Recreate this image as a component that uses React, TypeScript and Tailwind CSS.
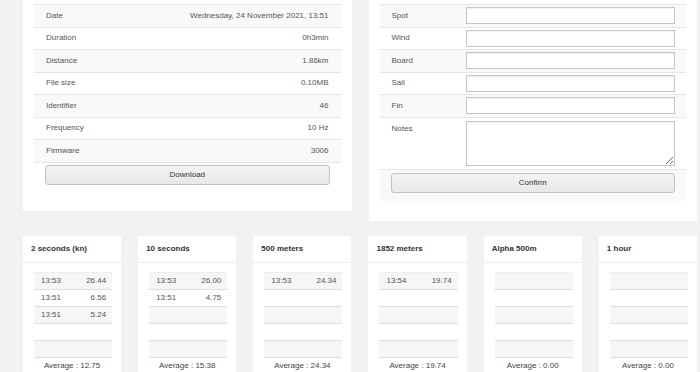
const info = [
  ['Date', 'Wednesday, 24 November 2021, 13:51'],
  ['Duration', '0h3min'],
  ['Distance', '1.86km'],
  ['File size', '0.10MB'],
  ['Identifier', '46'],
  ['Frequency', '10 Hz'],
  ['Firmware', '3006'],
];

const fields = ['Spot', 'Wind', 'Board', 'Sail', 'Fin'];

type Stat = { title: string; rows: [string, string][]; avg: string };

const stats: Stat[] = [
  { title: '2 seconds (kn)', rows: [['13:53', '26.44'], ['13:51', '6.56'], ['13:51', '5.24']], avg: '12.75' },
  { title: '10 seconds', rows: [['13:53', '26.00'], ['13:51', '4.75']], avg: '15.38' },
  { title: '500 meters', rows: [['13:53', '24.34']], avg: '24.34' },
  { title: '1852 meters', rows: [['13:54', '19.74']], avg: '19.74' },
  { title: 'Alpha 500m', rows: [], avg: '0.00' },
  { title: '1 hour', rows: [], avg: '0.00' },
];

function Button({ label }: { label: string }) {
  return (
    <button className="block w-full h-[20px] rounded-[3px] border border-[#c2c2c2] bg-gradient-to-b from-[#f3f3f3] to-[#e8e8e8] text-[8px] text-[#333]">
      {label}
    </button>
  );
}

function StatCard({ stat }: { stat: Stat }) {
  const rows = [0, 1, 2, 3, 4];
  return (
    <div className="bg-white h-[150px]">
      <div className="h-[27px] border-b border-[#ececec] px-[8px] flex items-center text-[8px] font-bold text-[#333]">
        {stat.title}
      </div>
      <div className="pt-[9px] pl-[11px] pr-[9px]">
        <div className="border-t border-[#eeeeee]">
          {rows.map((i) => {
            const r = stat.rows[i];
            return (
              <div
                key={i}
                className={`h-[17px] border-b border-[#dedede] flex items-center justify-between pl-[7px] pr-[6px] text-[8px] text-[#555] ${
                  i % 2 === 0 ? 'bg-[#f6f6f6]' : 'bg-white'
                }`}
              >
                <span>{r ? r[0] : ''}</span>
                <span>{r ? r[1] : ''}</span>
              </div>
            );
          })}
        </div>
      </div>
      <div className="h-[16px] flex items-center justify-center text-[8px] text-[#444]">
        Average : {stat.avg}
      </div>
    </div>
  );
}

export default function App() {
  return (
    <div
      className="min-h-screen bg-[#f2f2f2] pl-[23px] pr-[3px]"
      style={{ fontFamily: '"Liberation Sans", Arial, sans-serif' }}
    >
      <div className="flex items-start gap-[17px]">
        <div className="flex-1 bg-white px-[11px] pt-[4px] pb-[26px]">
          <div className="border-t border-[#e6e6e6]">
            {info.map(([k, v], i) => (
              <div
                key={k}
                className={`h-[22.5px] border-b border-[#e6e6e6] flex items-center justify-between px-[12px] text-[8px] text-[#555] ${
                  i % 2 === 0 ? 'bg-[#f9f9f9]' : 'bg-white'
                }`}
              >
                <span>{k}</span>
                <span>{v}</span>
              </div>
            ))}
          </div>
          <div className="pt-[2.5px] px-[11px]">
            <Button label="Download" />
          </div>
        </div>

        <div className="flex-1 bg-white px-[11px] pt-[4px] pb-[20px]">
          <div className="border-t border-[#e6e6e6]">
            {fields.map((f, i) => (
              <div
                key={f}
                className={`h-[22.5px] border-b border-[#e6e6e6] flex items-center pr-[11px] text-[8px] text-[#555] ${
                  i % 2 === 0 ? 'bg-[#f9f9f9]' : 'bg-white'
                }`}
              >
                <span className="w-[86px] pl-[12px] shrink-0">{f}</span>
                <input className="flex-1 h-[17px] border border-[#c6c6c6] bg-white shadow-[inset_0_1px_1px_rgba(0,0,0,0.06)] outline-none" />
              </div>
            ))}
            <div className="h-[52.5px] border-b border-[#e6e6e6] flex items-start pr-[11px] text-[8px] text-[#555] bg-white">
              <span className="w-[86px] pl-[12px] shrink-0 h-[22.5px] flex items-center">Notes</span>
              <textarea className="flex-1 mt-[3.5px] h-[45px] border border-[#c6c6c6] bg-white shadow-[inset_0_1px_1px_rgba(0,0,0,0.06)] outline-none" />
            </div>
            <div className="h-[30.5px] bg-[#f9f9f9] px-[11px] pt-[2.5px]">
              <Button label="Confirm" />
            </div>
          </div>
        </div>
      </div>

      <div className="mt-[15px] grid grid-cols-6 gap-[17px]">
        {stats.map((s) => (
          <StatCard key={s.title} stat={s} />
        ))}
      </div>
    </div>
  );
}
